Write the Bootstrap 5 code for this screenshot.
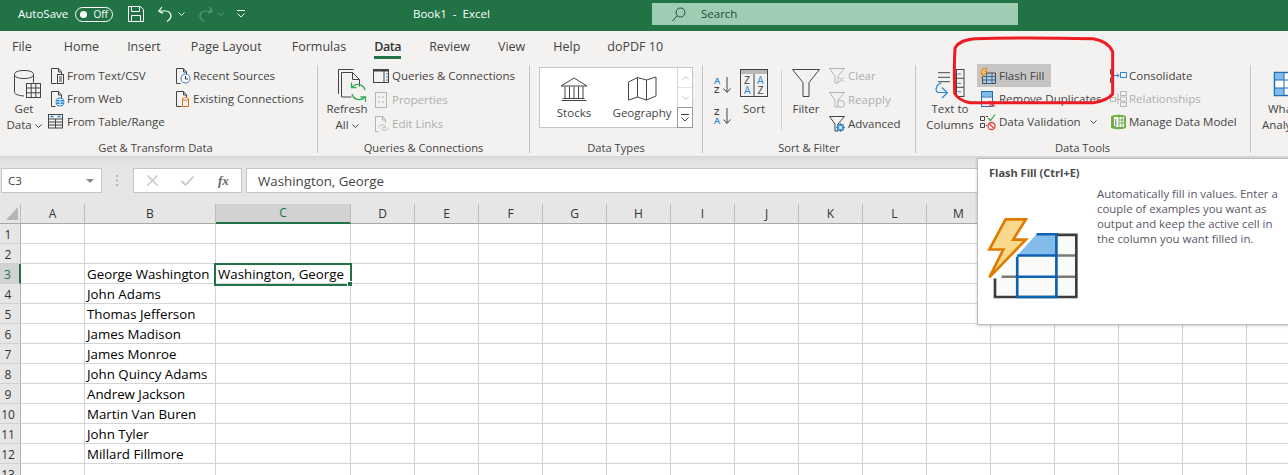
<!DOCTYPE html>
<html lang="en">
<head>
<meta charset="utf-8">
<title>Book1 - Excel</title>
<link rel="stylesheet" href="https://cdn.jsdelivr.net/npm/bootstrap@5.3.0/dist/css/bootstrap.min.css">
<style>
html,body{height:475px;overflow:hidden}
body{font-family:"Open Sans","Noto Sans","Liberation Sans",sans-serif;font-size:11.5px;color:#444;background:#e6e6e6;line-height:16px;width:1288px;position:relative}
svg{display:block;flex:none;overflow:visible}
svg.d-inline{display:inline}
.s{fill:none;stroke:#444;stroke-width:1}
.titlebar{height:31px;background:#217346;color:#fff;padding-bottom:3px}
.autosave{margin-left:18px;width:57px}
.toggle{width:38px;height:15px;border:1px solid #fff;border-radius:8px;font-size:10px;padding:0 4px}
.toggle i{width:7px;height:7px;border-radius:50%;background:#fff;display:block}
.ml4{margin-left:4px}.ml5{margin-left:5px}.ml13{margin-left:13px}.ml14{margin-left:14px}.ml15{margin-left:15px}
.book{margin-left:168px;width:239px}
.search{width:366px;height:22px;background:#9fcdb3;color:#17513a;padding-left:20px}
.tabs{height:31px;background:#f3f2f1;padding-left:12px;gap:29px;font-size:12.500px;color:#444}
.tabs>div{height:31px;line-height:31px;position:relative;white-space:nowrap}
.tabs .home{margin-left:3px}
.tabs .t1{margin-left:-1px}.tabs .t2{margin-left:1px}.tabs .t3{margin-left:-2px}
.tabs .on{font-weight:600;color:#333;letter-spacing:-.4px}
.tabs .on::after{content:"";position:absolute;left:0;right:0;top:25px;height:3px;background:#217346}
.ribbon{height:95px;background:#f3f2f1;padding-top:3px;border-bottom:1px solid #d6d6d6;overflow:hidden}
.grp{height:88px;border-right:1px solid #c6c6c6;flex:none}
.g1{width:318px}.g2{width:212px}.g3{width:173px}.g4{width:213px}.g5{width:335px}.g6{width:40px;border:0}
.gb{height:75px}
.gl{height:13px;line-height:16px;font-size:11.200px;text-align:center;white-space:nowrap}
.g1 .gl{padding-right:6px}.g5 .gl{padding-right:1px}
.big{display:flex;flex-direction:column;align-items:center;text-align:center;line-height:16px;white-space:nowrap;flex:none}
.big .bi{height:36px}
.col3{margin-top:-1px;flex:none}
.r23,.r24{display:flex;align-items:center;height:23px;white-space:nowrap;gap:3px}
.r24{height:24px}
.off{color:#aeaeae}
.ff{background:#c6c5c3;margin-left:-3px;padding-left:3px;width:74px}
.gal{width:154px;height:61px;margin:2px 0 0 9px;background:#fff;border:1px solid #c6c6c6}
.gal .it{width:68px}
.gal .it svg{margin-top:9px}.gal .it div{margin-top:4px}
.gsc{width:15px;margin-left:auto}
.gsc div{height:20px;border-left:1px solid #d8d8d8;border-bottom:1px solid #e3e3e3;display:flex;align-items:center;justify-content:center}
.gsc div:last-child{border:1px solid #9a9a9a;margin:-1px -1px -1px 0;height:21px}
.vr2{width:1px;height:60px;background:#d2d2d2;margin:5px 0 0 9px;flex:none}
/* ribbon placement */
.b-get{width:38px;margin-left:5px}.i-get{margin:5px 0 0 7px}
.c-g1a{width:128px;margin-left:5px;padding-left:2px}.c-g1a>div{gap:1px}
.c-g1b>div{gap:2px}
.ic-tbl{margin-left:-2px;margin-right:2px}
.b-ref{width:44px;margin-left:7px}.i-ref{margin:4px 0 0 10px}
.c-g2{margin-left:4px}
.c-az{width:18px;margin-left:11px;flex:none}.az1{margin-top:11px}.az2{margin-top:13px}
.b-sort{width:36px;margin-left:4px}.i-top{margin-top:4px}
.b-filt{width:38px;margin-left:5px}
.c-g4{margin-left:4px}
.b-ttc{width:50px;margin-left:9px}.i-ttc{margin:3px 0 0 4px}
.c-g5a{width:133px;margin-left:2px;padding-left:3px}
.c-g5b>div{gap:2px}
.chev{margin-left:6px}
.b-wi{width:60px;margin-left:11px;align-items:flex-start}.i-wi{margin:7px 0 0 12px}.l-wi{margin-left:6px}
.fbar{height:47px;padding-top:11px;background:linear-gradient(#dcdcdc,#e6e6e6 8px)}
.nbox{width:101px;height:25px;margin-left:1px;background:#fff;border:1px solid #c6c6c6;padding-left:6px}
.nbox svg{margin-right:7px}
.dots{width:31px;height:25px}
.fbtn{width:109px;height:25px;background:#fff;border:1px solid #c6c6c6}
.fx{font-family:"Liberation Serif",serif;margin-left:24px;font-size:13px;font-weight:700;color:#666}
.x1{margin-left:13px}.x2{margin-left:23px}
.finp{flex:1;height:25px;margin-left:4px;background:#fff;border:1px solid #c6c6c6;border-right:0;padding-left:11px;font-size:13.300px;color:#444}
.sheetwrap{overflow:hidden;background:#fff;height:271px}
table.sh{table-layout:fixed;border-collapse:separate;border-spacing:0;width:1311px;font-size:13.300px;color:#000}
.sh col.c0{width:21px}.sh col.ca{width:64px}.sh col.cb{width:131px}.sh col.cc{width:135px}
.sh th{height:19px;background:#e6e6e6;font-weight:400;text-align:center;border-right:1px solid #bdbdbd;border-bottom:1px solid #a8a8a8;font-size:12px;color:#333;padding:0;line-height:18px}
.sh th svg{margin-left:6px}
.sh td{height:20px;border-right:1px solid #d4d4d4;border-bottom:1px solid #d4d4d4;padding:2px 0 0 2px;line-height:17px;white-space:nowrap}
.sh td.rh{background:#e6e6e6;border-right:1px solid #b0b0b0;border-bottom:1px solid #d0d0d0;padding:2px 4px 0 0;text-align:center;color:#333;font-size:12px}
.sh th.csel{background:#d2d2d2;color:#217346;border-bottom:2px solid #217346}
.sh td.rsel{background:#d2d2d2;color:#217346;border-right:2px solid #217346}
.selcell{position:relative}
.selbox{position:absolute;left:-2px;top:-1px;right:-2px;bottom:-3px;border:2px solid #217346;pointer-events:none}
.selbox::after{content:"";position:absolute;right:-3px;bottom:-3px;width:6px;height:6px;background:#217346;border:1px solid #fff}
.tip{position:absolute;left:977px;top:158px;width:320px;height:167px;background:#fff;border:1px solid #bcbcbc;box-shadow:0 1px 3px rgba(0,0,0,.2);padding:6px 11px;color:#555;font-size:11.400px;line-height:15px}
.tip h6{font-size:11px;font-weight:700;color:#4a4a4a;margin:0;line-height:16px}
.tip .tx{margin-left:108px;margin-top:5px;width:190px;color:#5b5566}
.tip svg{position:absolute;left:10px;top:59px}
.redmark{position:absolute;left:860px;top:0;pointer-events:none}
</style>
</head>
<body>
<!-- title bar -->
<div class="titlebar d-flex align-items-center">
  <div class="autosave">AutoSave</div>
  <div class="toggle d-flex align-items-center justify-content-between"><i></i><span>Off</span></div>
  <svg class="ml15" width="16" height="16" viewBox="0 0 16 16"><path d="M.5.5h12l3 3v12H.5zM3.5.5v5h8v-5M3.5 15.5v-6h9v6" fill="none" stroke="#fff"/></svg>
  <svg class="ml14" width="15" height="16" viewBox="0 0 15 16"><path d="M4 1 .8 5 5 7.5M1 5h7a5 5 0 0 1 5 5c0 2.500-2 4-4 5.500" fill="none" stroke="#fff" stroke-width="1.200"/></svg>
  <svg class="ml5" width="7" height="4" viewBox="0 0 7 4"><path d="m.5.5 3 3 3-3" fill="none" stroke="#fff"/></svg>
  <svg class="ml13" width="15" height="16" viewBox="0 0 15 16"><path d="M11 1l3.200 4L10 7.500M14 5H7a5 5 0 0 0-5 5c0 2.500 2 4 4 5.500" fill="none" stroke="#5a9c7a" stroke-width="1.200"/></svg>
  <svg class="ml4" width="7" height="4" viewBox="0 0 7 4"><path d="m.5.5 3 3 3-3" fill="none" stroke="#5a9c7a"/></svg>
  <svg class="ml13" width="8" height="8" viewBox="0 0 8 8"><path d="M0 .5h8M.5 3.500l3.500 3.500 3.500-3.500" fill="none" stroke="#fff"/></svg>
  <div class="book text-nowrap">Book1 &nbsp;-&nbsp; Excel</div>
  <div class="search d-flex align-items-center">
    <svg width="14" height="15" viewBox="0 0 14 15"><circle cx="8.500" cy="5.500" r="4.500" fill="none" stroke="#17513a"/><path d="M5 9 .5 14" stroke="#17513a" fill="none"/></svg>
    <span class="ml15">Search</span>
  </div>
</div>
<!-- tabs -->
<div class="tabs d-flex">
  <div>File</div><div class="home">Home</div><div class="t1">Insert</div><div class="t2">Page Layout</div><div class="t2">Formulas</div><div class="on t1">Data</div><div class="t1">Review</div><div class="t1">View</div><div class="t1">Help</div><div class="t3">doPDF 10</div>
</div>
<!-- ribbon -->
<div class="ribbon d-flex">
  <div class="grp g1">
    <div class="gb d-flex">
      <div class="big b-get">
        <div class="bi"><svg class="i-get" width="28" height="29" viewBox="0 0 28 29"><path class="s" d="M.5 4.500C.5 2 4 .5 10 .5s9.500 1.500 9.500 4v8M.5 4.500c0 2.500 3.500 4 9.500 4s9.500-1.500 9.500-4M.5 4.500V22c0 2 3 3.500 9.500 4" /><rect x="12.500" y="13.500" width="14" height="14" fill="#f3f2f1" stroke="#444"/><path class="s" d="M12.500 18h14M12.500 22.800h14M17.200 13.500v14M21.800 13.500v14"/></svg></div>
        <div>Get</div><div>Data <svg class="d-inline" width="7" height="4" viewBox="0 0 7 4"><path d="m.5.5 3 3 3-3" class="s"/></svg></div>
      </div>
      <div class="col3 c-g1a">
        <div class="r23"><svg width="16" height="16" viewBox="0 0 16 16"><path class="s" d="M1.500 15.500V.5h7l3 3.500v2M8.500.5V4h3M1.500 15.500h5"/><rect x="7.500" y="6.500" width="6" height="9" fill="#f3f2f1" stroke="#444"/><path class="s" d="M9 9h3M9 11h3M9 13h3"/></svg>From Text/CSV</div>
        <div class="r23"><svg width="16" height="16" viewBox="0 0 16 16"><path class="s" d="M1.500 15.500V.5h7l3 3.500v3M8.500.5V4h3M1.500 15.500h4"/><circle cx="10" cy="11" r="4.500" fill="#2b88d8"/><path d="M5.500 11h9M10 6.500v9M7 8.500h6M7 13.500h6" stroke="#fff" stroke-width=".8"/></svg>From Web</div>
        <div class="r23"><svg class="ic-tbl" width="16" height="15" viewBox="0 0 16 15"><rect x=".5" y=".5" width="14" height="13.500" class="s"/><path class="s" d="M.5 5h14M.5 8h14M.5 11h14M7.500 5v9"/><path d="M2.500 2.500h3M9.500 2.500h3" stroke="#2b88d8" stroke-width="1.500"/></svg>From Table/Range</div>
      </div>
      <div class="col3 c-g1b">
        <div class="r23"><svg width="15" height="16" viewBox="0 0 15 16"><path class="s" d="M.5 15.500V.5h7l3 3.500v2M7.500.5V4h3M.5 15.500h4"/><circle cx="9.500" cy="10.500" r="4.500" fill="#fff" stroke="#2b7cd3"/><path d="M9.500 8v3H12" stroke="#333" fill="none"/></svg>Recent Sources</div>
        <div class="r23"><svg width="15" height="16" viewBox="0 0 15 16"><path class="s" d="M.5 15.500V.5h7l3 3.500v2M7.500.5V4h3M.5 15.500h5"/><path d="M6.500 8c0-2 6-2 6 0v7.500h-6z" fill="#f3f2f1" stroke="#d9730d"/><path d="M6.500 8c0 1.500 6 1.500 6 0" fill="none" stroke="#d9730d"/></svg>Existing Connections</div>
      </div>
    </div>
    <div class="gl">Get &amp; Transform Data</div>
  </div>

  <div class="grp g2">
    <div class="gb d-flex">
      <div class="big b-ref">
        <div class="bi"><svg class="i-ref" width="29" height="31" viewBox="0 0 29 31"><path class="s" d="M.5 25V.5h15M3.500 28V3.500h11l7 7v7M14.500 3.500v7h7M3.500 28h10"/><path d="M27 21a7.500 7.500 0 0 0-13-3M14 25a7.500 7.500 0 0 0 13 3" fill="none" stroke="#35a853" stroke-width="1.300"/><path d="M13.500 13.500v5h5M27.500 33v-5h-5" fill="none" stroke="#35a853" stroke-width="1.300"/></svg></div>
        <div>Refresh</div><div>All <svg class="d-inline" width="7" height="4" viewBox="0 0 7 4"><path d="m.5.5 3 3 3-3" class="s"/></svg></div>
      </div>
      <div class="col3 c-g2">
        <div class="r24"><svg width="16" height="14" viewBox="0 0 16 14"><rect x=".5" y=".5" width="15" height="13" class="s"/><path d="M.5 1.500h15" stroke="#444" stroke-width="2"/><path d="M11 1v12" stroke="#444"/><path d="M13 5h2M13 8h2M13 11h2" stroke="#2b88d8" stroke-width="1.200"/></svg>Queries &amp; Connections</div>
        <div class="r24 off"><svg width="16" height="16" viewBox="0 0 16 16"><rect x="2.500" y=".5" width="11" height="15" fill="none" stroke="#b5b5b5"/><path d="M5 5h2M9 5h2M5 10h2M9 10h2" stroke="#b5b5b5"/></svg>Properties</div>
        <div class="r24 off"><svg width="16" height="16" viewBox="0 0 16 16"><path d="M2.500 15.500V.5h7l3 3.500v3M9.500.5V4h3M2.500 15.500h3" fill="none" stroke="#b5b5b5"/><path d="M6 11.500c0-2 2-2.500 3.500-2.500s3 .5 3 2-3 1-3 0M15 11.500c0 2-2 3-3.500 3s-3-1-3-2" fill="none" stroke="#b5b5b5"/></svg>Edit Links</div>
      </div>
    </div>
    <div class="gl">Queries &amp; Connections</div>
  </div>

  <div class="grp g3">
    <div class="gb d-flex">
      <div class="gal d-flex">
        <div class="it d-flex flex-column align-items-center">
          <svg width="28" height="24" viewBox="0 0 28 24"><path class="s" d="M1 9 14 1l13 8zM3 21V22M1.500 23.500h25M3.500 21.500h21M5 9.500v12M9.500 9.500v12M14 9.500v12M18.500 9.500v12M23 9.500v12"/></svg>
          <div>Stocks</div>
        </div>
        <div class="it d-flex flex-column align-items-center">
          <svg width="29" height="24" viewBox="0 0 29 24"><path class="s" d="M.5 5 9.500.5 18.500 3l9.500-3V19l-9.500 4-9-3-9 3zM9.500.5v19.500M18.500 3v20"/></svg>
          <div>Geography</div>
        </div>
        <div class="gsc">
          <div><svg width="7" height="4" viewBox="0 0 7 4"><path d="m.5 3.500 3-3 3 3" fill="none" stroke="#bbb"/></svg></div>
          <div><svg width="7" height="4" viewBox="0 0 7 4"><path d="m.5.5 3 3 3-3" fill="none" stroke="#bbb"/></svg></div>
          <div><svg width="8" height="8" viewBox="0 0 8 8"><path d="M0 .5h8M.5 3.500l3.500 3.500 3.500-3.500" class="s"/></svg></div>
        </div>
      </div>
    </div>
    <div class="gl">Data Types</div>
  </div>

  <div class="grp g4">
    <div class="gb d-flex">
      <div class="c-az">
        <svg class="az1" width="18" height="18" viewBox="0 0 18 18" font-family="Open Sans,sans-serif" font-size="9.500" font-weight="600"><text x="0" y="8" fill="#2b88d8">A</text><text x="0" y="17" fill="#444">Z</text><path class="s" d="M13 1v15M9.500 12.500 13 16.500l3.500-4"/></svg>
        <svg class="az2" width="18" height="18" viewBox="0 0 18 18" font-family="Open Sans,sans-serif" font-size="9.500" font-weight="600"><text x="0" y="8" fill="#444">Z</text><text x="0" y="17" fill="#2b88d8">A</text><path class="s" d="M13 1v15M9.500 12.500 13 16.500l3.500-4"/></svg>
      </div>
      <div class="big b-sort">
        <div class="bi"><svg class="i-top" width="28" height="28" viewBox="0 0 28 28" font-family="Open Sans,sans-serif" font-size="10.500"><rect x=".5" y=".5" width="27" height="27" class="s"/><rect x="1" y="1" width="26" height="4" fill="#b9b9b9"/><path class="s" d="M14 5v22"/><text x="4" y="15" fill="#444">Z</text><text x="4" y="25" fill="#2b88d8">A</text><text x="17" y="15" fill="#2b88d8">A</text><text x="17.500" y="25" fill="#444">Z</text></svg></div>
        <div>Sort</div>
      </div>
      <div class="vr2"></div>
      <div class="big b-filt">
        <div class="bi"><svg class="i-top" width="28" height="28" viewBox="0 0 28 28"><path class="s" d="M.5.5h27L17 13.500v14h-6v-14z"/></svg></div>
        <div>Filter</div>
      </div>
      <div class="col3 c-g4">
        <div class="r24 off"><svg width="16" height="16" viewBox="0 0 16 16"><path d="M.5.5h15L9 8v7H6V8zM10 9l5 5M15 9l-5 5" fill="none" stroke="#b5b5b5"/></svg>Clear</div>
        <div class="r24 off"><svg width="16" height="16" viewBox="0 0 16 16"><path d="M.5.5h15L9 8v7H6V8z" fill="none" stroke="#b5b5b5"/><circle cx="12" cy="12" r="3.500" fill="#f3f2f1" stroke="#b5b5b5"/></svg>Reapply</div>
        <div class="r24"><svg width="16" height="16" viewBox="0 0 16 16"><path class="s" d="M.5.5h15L9 8v7H6V8z"/><circle cx="11.500" cy="11.500" r="3" fill="#f3f2f1" stroke="#2b88d8" stroke-width="1.500"/><path d="M11.500 7v9M7 11.500h9M8.500 8.500l6 6M14.500 8.500l-6 6" stroke="#2b88d8"/><circle cx="11.500" cy="11.500" r="1.500" fill="#f3f2f1"/></svg>Advanced</div>
      </div>
    </div>
    <div class="gl">Sort &amp; Filter</div>
  </div>

  <div class="grp g5">
    <div class="gb d-flex">
      <div class="big b-ttc">
        <div class="bi"><svg class="i-ttc" width="30" height="30" viewBox="0 0 30 30"><path class="s" d="M1 4.700h12M1 9.300h12M1 13.700h12"/><rect x="19.500" y="1.500" width="7.500" height="27" class="s"/><path class="s" d="M19.500 10.300h7.500M19.500 19.300h7.500"/><path d="M20.500 6H24M20.500 15.300H24M20.500 23.700H24" stroke="#2b88d8"/><path d="M4.500 15C0 16-3 22 1 24.500h9M5 19.500l5.300 5.200-5.300 5.300" fill="none" stroke="#2b88d8" stroke-width="1.200"/></svg></div>
        <div>Text to</div><div>Columns</div>
      </div>
      <div class="col3 c-g5a">
        <div class="r23 ff"><svg width="16" height="16" viewBox="0 0 16 16"><path d="M4 5h11.500v10.500h-13V9" fill="none" stroke="#444"/><path d="M6.500 5v10.500h5.500V5M2.500 8.500h13M2.500 12h13" fill="none" stroke="#1f6fb5"/><path d="M3 .5h4L5 3.500h2L1.500 10l1.500-4.500H1z" fill="#f6c85f" stroke="#d9730d" stroke-width=".8"/></svg>Flash Fill</div>
        <div class="r23"><svg width="16" height="16" viewBox="0 0 16 16"><rect x="1.500" y=".5" width="11" height="15" fill="none" stroke="#1f6fb5"/><rect x="2" y="1" width="10" height="4.500" fill="#83bbeb"/><path d="M1.500 6h11" stroke="#1f6fb5"/><path d="m9 10 6 5.500M15 10l-6 5.500" stroke="#e8413c" stroke-width="1.300"/></svg>Remove Duplicates</div>
        <div class="r23"><svg width="16" height="16" viewBox="0 0 16 16"><path class="s" d="M.5 2.500h4v4h-4zM.5 9.500h4v4h-4zM6 2.500h2M6 11.500h1"/><path d="m8 4 2.500 2.500L15 .5" fill="none" stroke="#35a853" stroke-width="1.200"/><circle cx="11.500" cy="12" r="3.500" fill="#fff" stroke="#e8413c" stroke-width="1.300"/><path d="m9 9.500 5 5" stroke="#e8413c" stroke-width="1.300"/></svg>Data Validation<svg class="chev" width="7" height="4" viewBox="0 0 7 4"><path d="m.5.5 3 3 3-3" class="s"/></svg></div>
      </div>
      <div class="col3 c-g5b">
        <div class="r23"><svg width="17" height="14" viewBox="0 0 17 14"><path class="s" d="M3 .5H.5V5H3M3 9H.5v4.500H3"/><rect x="10.500" y="3.500" width="6" height="5" fill="none" stroke="#2b88d8"/><path d="M1 6.500h8M7 4.500l2 2-2 2" fill="none" stroke="#2b88d8"/></svg>Consolidate</div>
        <div class="r23 off"><svg width="17" height="16" viewBox="0 0 17 16"><path d="M.5 6.500h5v4h-5zM10.500.5h6v4h-6zM10.500 6h6v4h-6zM10.500 11.500h6v4h-6zM5.500 8.500h5M8 2.500v11" fill="none" stroke="#b5b5b5"/></svg>Relationships</div>
        <div class="r23"><svg width="17" height="16" viewBox="0 0 17 16"><path d="M1 3c0-3 15-3 15 0v10c0 3-15 3-15 0z" fill="#70ad47"/><rect x="4" y="3" width="10" height="10" fill="#fff"/><path d="M9 3v10M12 3v10M9 6h5M9 9h5" stroke="#70ad47"/><text x="4.500" y="12" font-size="9" font-family="Open Sans,sans-serif" fill="#444">J</text></svg>Manage Data Model</div>
      </div>
    </div>
    <div class="gl">Data Tools</div>
  </div>

  <div class="grp g6">
    <div class="gb">
      <div class="big b-wi">
        <div class="bi"><svg class="i-wi" width="30" height="24" viewBox="0 0 30 24"><rect x=".5" y=".5" width="29" height="23" fill="#fff" stroke="#1f6fb5" stroke-width="1.500"/><path d="M1 1h9v7H1zM1 16h9v7H1z" fill="#83bbeb"/><path d="M10 .5v23M.5 8h29M.5 16h29" stroke="#1f6fb5" fill="none"/></svg></div>
        <div class="l-wi">What-If</div><div>Analysis</div>
      </div>
    </div>
  </div>
</div>
<!-- formula bar -->
<div class="fbar d-flex">
  <div class="nbox d-flex align-items-center justify-content-between">C3<svg width="8" height="4" viewBox="0 0 8 4"><path d="M0 0h8L4 4z" fill="#8a8a8a"/></svg></div>
  <div class="dots d-flex align-items-center justify-content-center"><svg width="3" height="11" viewBox="0 0 3 11"><path d="M0 0h2v2H0zM0 4.500h2v2H0zM0 9h2v2H0z" fill="#b5b5b5"/></svg></div>
  <div class="fbtn d-flex align-items-center">
    <svg class="x1" width="11" height="11" viewBox="0 0 11 11"><path d="m.5.500 10 10M10.500.5l-10 10" stroke="#c8c8c8" stroke-width="1.500"/></svg>
    <svg class="x2" width="13" height="10" viewBox="0 0 13 10"><path d="m.5 5 4 4 8-8.500" fill="none" stroke="#c8c8c8" stroke-width="1.800"/></svg>
    <span class="fx fst-italic">fx</span>
  </div>
  <div class="finp d-flex align-items-center text-nowrap">Washington, George</div>
</div>
<!-- sheet -->
<div class="sheetwrap">
<table class="sh">
<colgroup><col class="c0"><col class="ca"><col class="cb"><col class="cc"><col span="15" class="ca"></colgroup>
<thead><tr><th><svg width="12" height="13" viewBox="0 0 12 13"><path d="M12 0v13H0z" fill="#b5b5b5"/></svg></th><th>A</th><th>B</th><th class="csel">C</th><th>D</th><th>E</th><th>F</th><th>G</th><th>H</th><th>I</th><th>J</th><th>K</th><th>L</th><th>M</th><th></th><th></th><th></th><th></th><th></th></tr></thead>
<tbody>
<tr><td class="rh">1</td><td></td><td></td><td></td><td></td><td></td><td></td><td></td><td></td><td></td><td></td><td></td><td></td><td></td><td></td><td></td><td></td><td></td><td></td></tr>
<tr><td class="rh">2</td><td></td><td></td><td></td><td></td><td></td><td></td><td></td><td></td><td></td><td></td><td></td><td></td><td></td><td></td><td></td><td></td><td></td><td></td></tr>
<tr><td class="rh rsel">3</td><td></td><td>George Washington</td><td class="selcell">Washington, George<span class="selbox"></span></td><td></td><td></td><td></td><td></td><td></td><td></td><td></td><td></td><td></td><td></td><td></td><td></td><td></td><td></td><td></td></tr>
<tr><td class="rh">4</td><td></td><td>John Adams</td><td></td><td></td><td></td><td></td><td></td><td></td><td></td><td></td><td></td><td></td><td></td><td></td><td></td><td></td><td></td><td></td></tr>
<tr><td class="rh">5</td><td></td><td>Thomas Jefferson</td><td></td><td></td><td></td><td></td><td></td><td></td><td></td><td></td><td></td><td></td><td></td><td></td><td></td><td></td><td></td><td></td></tr>
<tr><td class="rh">6</td><td></td><td>James Madison</td><td></td><td></td><td></td><td></td><td></td><td></td><td></td><td></td><td></td><td></td><td></td><td></td><td></td><td></td><td></td><td></td></tr>
<tr><td class="rh">7</td><td></td><td>James Monroe</td><td></td><td></td><td></td><td></td><td></td><td></td><td></td><td></td><td></td><td></td><td></td><td></td><td></td><td></td><td></td><td></td></tr>
<tr><td class="rh">8</td><td></td><td>John Quincy Adams</td><td></td><td></td><td></td><td></td><td></td><td></td><td></td><td></td><td></td><td></td><td></td><td></td><td></td><td></td><td></td><td></td></tr>
<tr><td class="rh">9</td><td></td><td>Andrew Jackson</td><td></td><td></td><td></td><td></td><td></td><td></td><td></td><td></td><td></td><td></td><td></td><td></td><td></td><td></td><td></td><td></td></tr>
<tr><td class="rh">10</td><td></td><td>Martin Van Buren</td><td></td><td></td><td></td><td></td><td></td><td></td><td></td><td></td><td></td><td></td><td></td><td></td><td></td><td></td><td></td><td></td></tr>
<tr><td class="rh">11</td><td></td><td>John Tyler</td><td></td><td></td><td></td><td></td><td></td><td></td><td></td><td></td><td></td><td></td><td></td><td></td><td></td><td></td><td></td><td></td></tr>
<tr><td class="rh">12</td><td></td><td>Millard Fillmore</td><td></td><td></td><td></td><td></td><td></td><td></td><td></td><td></td><td></td><td></td><td></td><td></td><td></td><td></td><td></td><td></td></tr>
<tr><td class="rh">13</td><td></td><td></td><td></td><td></td><td></td><td></td><td></td><td></td><td></td><td></td><td></td><td></td><td></td><td></td><td></td><td></td><td></td><td></td></tr>
</tbody>
</table>
</div>
<!-- tooltip -->
<div class="tip">
  <h6>Flash Fill (Ctrl+E)</h6>
  <div class="tx">Automatically fill in values. Enter a couple of examples you want as output and keep the active cell in the column you want filled in.</div>
  <svg width="91" height="83" viewBox="84 203 274 250"><path d="M105 441V385L172 316 230 252H350V441z" fill="#fafafa"/><path d="M230 252h60v64H172z" fill="#83bbeb"/><path d="M290 316h62M290 380h62M125 380h47" stroke="#7a7a72" stroke-width="8" fill="none"/><path d="M105 385V441H350V254H290" fill="none" stroke="#3d3d3d" stroke-width="8"/><path d="M172 320V441h118V252H230M172 316h118M172 380h118" fill="none" stroke="#0a62b0" stroke-width="8"/><path d="M137 207h61l-38 61h38L88 382l42-84H88z" fill="#f8d98b" stroke="#e07b00" stroke-width="8"/></svg>
</div>
<!-- red annotation -->
<svg class="redmark" width="428" height="160" viewBox="0 0 1284 480"><path d="M345 116C460 112 600 114 700 116 735 122 750 135 758 155V282C745 298 725 304 700 308 560 307 430 308 330 308 305 303 292 295 284 280 283 230 282 190 285 145 295 125 315 120 345 116Z" fill="none" stroke="#ed1c24" stroke-width="9"/></svg>
<script src="https://cdn.jsdelivr.net/npm/bootstrap@5.3.0/dist/js/bootstrap.bundle.min.js"></script>
</body>
</html>
